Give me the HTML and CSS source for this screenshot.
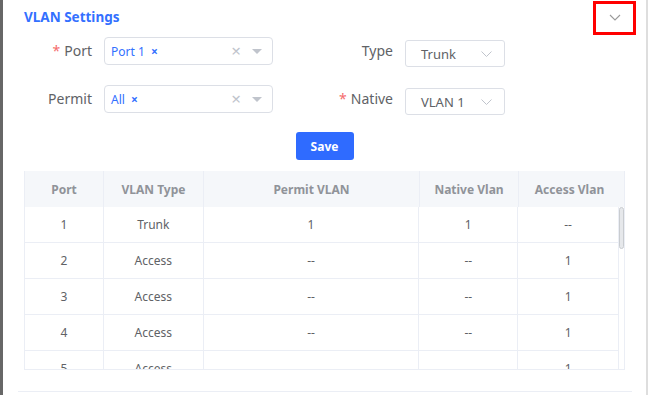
FILE: index.html
```html
<!DOCTYPE html>
<html lang="en">
<head>
  <meta charset="UTF-8" />
  <title>VLAN Settings</title>
  <link rel="stylesheet" href="styles.css">
</head>
<body>
  <div class="frame">
    <div class="side"></div>
    <main class="page">
      <section class="card">
        <header class="card-head">
          <h2>VLAN Settings</h2>
          <button class="collapse" type="button">
            <svg width="12" height="7" viewBox="0 0 12 7"><path d="M1 1l5 5 5-5" fill="none" stroke="#9a9a9a" stroke-width="1.1"/></svg>
          </button>
        </header>

        <form class="vlan-form">
          <div class="field">
            <label class="req">Port</label>
            <div class="multi">
              <span class="tag">Port 1 <b>×</b></span>
              <span class="clear">×</span>
              <span class="caret"></span>
            </div>
          </div>
          <div class="field">
            <label>Type</label>
            <div class="select">
              <span>Trunk</span>
              <svg width="11" height="6" viewBox="0 0 11 6"><path d="M0.5 0.5l5 5 5-5" fill="none" stroke="#c0c4cc" stroke-width="1"/></svg>
            </div>
          </div>
          <div class="field">
            <label>Permit</label>
            <div class="multi">
              <span class="tag">All <b>×</b></span>
              <span class="clear">×</span>
              <span class="caret"></span>
            </div>
          </div>
          <div class="field">
            <label class="req">Native</label>
            <div class="select">
              <span>VLAN 1</span>
              <svg width="11" height="6" viewBox="0 0 11 6"><path d="M0.5 0.5l5 5 5-5" fill="none" stroke="#c0c4cc" stroke-width="1"/></svg>
            </div>
          </div>
        </form>

        <div class="actions">
          <button class="btn-save" type="button">Save</button>
        </div>

        <div class="table">
          <div class="thead">
            <div class="tr">
              <div class="c1">Port</div>
              <div class="c2">VLAN Type</div>
              <div class="c3">Permit VLAN</div>
              <div class="c4">Native Vlan</div>
              <div class="c5">Access Vlan</div>
              <div class="gutter"></div>
            </div>
          </div>
          <div class="tbody-wrap">
            <div class="tbody" id="rows"></div>
            <div class="thumb"></div>
          </div>
        </div>
      </section>
    </main>
  </div>

  <script>
    // Port table rows
    const rows = document.getElementById('rows');
    for (let i = 1; i <= 18; i++) {
      const trunk = i === 1;
      const tr = document.createElement('div');
      tr.className = 'tr';
      tr.innerHTML =
        '<div class="c1">' + i + '</div>' +
        '<div class="c2">' + (trunk ? 'Trunk' : 'Access') + '</div>' +
        '<div class="c3">' + (trunk ? '1' : '--') + '</div>' +
        '<div class="c4">' + (trunk ? '1' : '--') + '</div>' +
        '<div class="c5">' + (trunk ? '--' : '1') + '</div>';
      rows.appendChild(tr);
    }
  </script>
</body>
</html>
```

FILE: styles.css
```css
:root {
  --blue: #3370ff;
  --text: #606266;
  --muted: #909399;
  --line: #ebeef5;
  --input-border: #dcdfe6;
  --placeholder: #c0c4cc;
}

* {
  box-sizing: border-box;
  margin: 0;
  padding: 0;
}

body {
  font-family: "Noto Sans", "Noto Sans CJK SC", sans-serif;
  background: #fff;
  color: var(--text);
}

.frame {
  display: flex;
  height: 395px;
  overflow: hidden;
}

.side {
  width: 3px;
  background: #676767;
}

.page {
  width: 645px;
  border-right: 2px solid #dedede;
}

.card {
  margin-left: 15px;
  width: 614px;
  height: 392px;
  padding: 1px 0 0 6px;
  border-bottom: 1px solid var(--line);
}

/* Header */
.card-head {
  display: flex;
  align-items: center;
  justify-content: space-between;
  height: 34px;
  margin-right: -4px;
}

.card-head h2 {
  font-size: 13.5px;
  font-weight: 700;
  color: var(--blue);
  margin-top: -2px;
}

.collapse {
  width: 43px;
  height: 34px;
  border: 3px solid #ff0000;
  background: #fff;
  display: flex;
  align-items: center;
  justify-content: center;
  padding-bottom: 2px;
}

/* Form */
.vlan-form {
  display: grid;
  grid-template-columns: 301px 1fr;
  row-gap: 20px;
  margin-top: 2px;
}

.field {
  display: flex;
  align-items: flex-start;
  height: 28px;
}

.field label {
  width: 80px;
  padding-right: 12px;
  text-align: right;
  font-size: 14px;
  line-height: 28px;
  color: var(--text);
}

.field label.req::before {
  content: "*";
  color: #f56c6c;
  margin-right: 4px;
}

.multi {
  width: 169px;
  height: 28px;
  border: 1px solid var(--input-border);
  border-radius: 4px;
  display: flex;
  align-items: center;
  padding: 0 10px 0 6px;
}

.tag {
  font-size: 12px;
  color: var(--blue);
  flex: 1;
}

.tag b {
  font-size: 12px;
  margin-left: 3px;
}

.clear {
  color: var(--placeholder);
  font-size: 17px;
  line-height: 1;
  margin-right: 11px;
  margin-top: -1px;
}

.caret {
  width: 0;
  height: 0;
  border-left: 5px solid transparent;
  border-right: 5px solid transparent;
  border-top: 5px solid var(--placeholder);
}

.select {
  margin-top: 3px;
  width: 100px;
  height: 27px;
  border: 1px solid var(--input-border);
  border-radius: 3px;
  display: flex;
  align-items: center;
  justify-content: space-between;
  padding: 0 12px 0 15px;
  font-size: 13px;
  color: var(--text);
}

/* Save */
.actions {
  display: flex;
  justify-content: center;
  width: 601px;
  margin-top: 19px;
}

.btn-save {
  width: 58px;
  height: 28px;
  border: none;
  border-radius: 3px;
  background: #2f6bff;
  color: #fff;
  font-family: inherit;
  font-size: 12px;
  font-weight: 700;
}

/* Table */
.table {
  width: 601px;
  margin-top: 11px;
  border-left: 1px solid var(--line);
  border-right: 1px solid var(--line);
  border-bottom: 1px solid var(--line);
}

.tr {
  display: flex;
  height: 36px;
  border-bottom: 1px solid var(--line);
}

.tr > div {
  display: flex;
  align-items: center;
  justify-content: center;
  border-right: 1px solid var(--line);
  font-size: 12px;
}

.c1 { width: 79px; }
.c2 { width: 100px; }
.c3 { width: 216px; }
.c4 { width: 99px; }
.c5 { width: 101px; }

.thead .tr {
  background: #f5f7fa;
  border-bottom: none;
}

.thead .tr > div {
  color: var(--muted);
  font-weight: 700;
}

.thead .tr > .c5,
.thead .tr > .gutter {
  border-right: none;
}

.thead .tr > .gutter {
  width: 3px;
}

.tbody-wrap {
  position: relative;
}

.tbody {
  height: 162px;
  overflow: hidden;
  padding-right: 5px;
}

.tbody .tr > div {
  color: var(--text);
}

/* scrollbar thumb drawn over the body edge */
.thumb {
  position: absolute;
  top: 0;
  right: 0;
  width: 5px;
  height: 42px;
  background: #e6e8eb;
  border: 1px solid #c9ccd0;
  border-radius: 3px;
}
```
